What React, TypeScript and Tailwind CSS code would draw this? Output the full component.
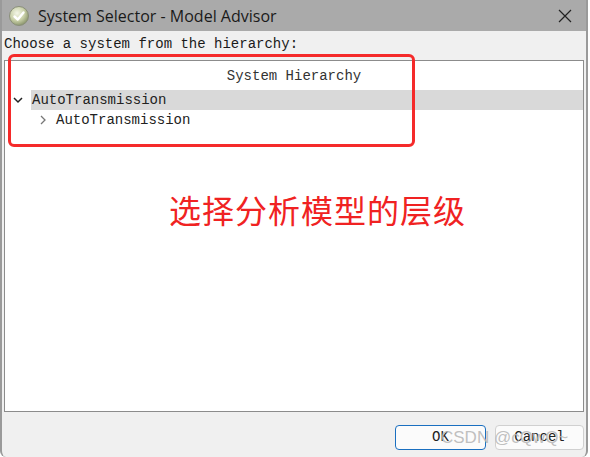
import React from 'react';

const mono = { fontFamily: '"Liberation Mono", "DejaVu Sans Mono", monospace' };

const TitleIcon = () => (
  <svg width="22" height="22" viewBox="0 0 22 22">
    <defs>
      <radialGradient id="g" cx="40%" cy="35%" r="65%">
        <stop offset="0%" stopColor="#f4f6e8" />
        <stop offset="60%" stopColor="#c9d0a8" />
        <stop offset="100%" stopColor="#8e9870" />
      </radialGradient>
    </defs>
    <circle cx="11" cy="11" r="9.5" fill="url(#g)" stroke="#8a8f7a" strokeWidth="1" />
    <path d="M6.5 11.5 L9.8 14.5 L15.5 7.5" fill="none" stroke="#ffffff" strokeWidth="2.4" strokeLinecap="round" strokeLinejoin="round" />
  </svg>
);

export default function App() {
  return (
    <div className="relative w-[590px] h-[457px] overflow-hidden bg-white">
      <div className="flex flex-col w-[588px] h-[457px] bg-[#f0f0f0] border-l-2 border-r-2 border-[#9a9a9a] rounded-bl-[6px] rounded-br-[6px]">
        {/* title bar */}
        <div className="flex items-center h-[31px] bg-[#aaaaaa] pl-[6px] pr-[14px] shrink-0">
          <TitleIcon />
          <span className="ml-[8px] text-[16px] text-[#1a1a1a] leading-none" style={{ fontFamily: '"Open Sans", "Noto Sans", sans-serif' }}>
            System Selector - Model Advisor
          </span>
          <svg className="ml-auto" width="14" height="14" viewBox="0 0 14 14">
            <path d="M1 1 L13 13 M13 1 L1 13" stroke="#222" strokeWidth="1.2" />
          </svg>
        </div>

        {/* label */}
        <div className="h-[29px] pl-[2px] pt-[4px] text-[14px] leading-[18px] text-[#1a1a1a]" style={mono}>
          Choose a system from the hierarchy:
        </div>

        {/* tree panel */}
        <div className="relative mx-[2px] h-[352px] bg-white border border-[#8c8c8c]">
          <div className="h-[29px] flex items-center justify-center text-[14px] text-[#333] pt-[2px]" style={mono}>
            System Hierarchy
          </div>
          <div className="flex items-center h-[20px]">
            <div className="w-[26px] flex justify-center">
              <svg width="10" height="8" viewBox="0 0 10 8">
                <path d="M1 2 L5 6 L9 2" fill="none" stroke="#222" strokeWidth="1.5" />
              </svg>
            </div>
            <div className="flex-1 h-full bg-[#d9d9d9] flex items-center pl-[1px] text-[14px] text-[#222]" style={mono}>
              AutoTransmission
            </div>
          </div>
          <div className="flex items-center h-[20px] pl-[34px] text-[14px] text-[#222]" style={mono}>
            <svg width="8" height="10" viewBox="0 0 8 10">
              <path d="M2 1 L6 5 L2 9" fill="none" stroke="#777" strokeWidth="1.3" />
            </svg>
            <span className="ml-[9px]">AutoTransmission</span>
          </div>

          {/* annotation box */}
          <div className="absolute left-[3px] top-[-7px] w-[407px] h-[93px] border-[3px] border-[#f52a2a] rounded-[6px]" />

          <div className="absolute left-[164px] top-[132px] text-[32px] leading-none text-[#f02222] tracking-[1px]" style={{ fontFamily: '"Noto Sans CJK SC", sans-serif' }}>
            选择分析模型的层级
          </div>
        </div>

        {/* buttons */}
        <div className="flex justify-end gap-[9px] pt-[13px] pr-[2px]">
          <button className="w-[91px] h-[25px] border border-[#1a6fc0] rounded-[4px] bg-[#fbfbfb] text-[14px] text-[#222]" style={mono}>
            OK
          </button>
          <button className="w-[89px] h-[25px] border border-[#d0d0d0] rounded-[4px] bg-[#fbfbfb] text-[14px] text-[#222]" style={mono}>
            Cancel
          </button>
        </div>
      </div>

      {/* watermark */}
      <div className="absolute left-[441px] top-[427px] text-[17px] text-[#b8b8b8]/90 leading-[22px]" style={{ fontFamily: '"Liberation Sans", Arial, sans-serif' }}>
        CSDN @cQwQ~
      </div>
    </div>
  );
}
